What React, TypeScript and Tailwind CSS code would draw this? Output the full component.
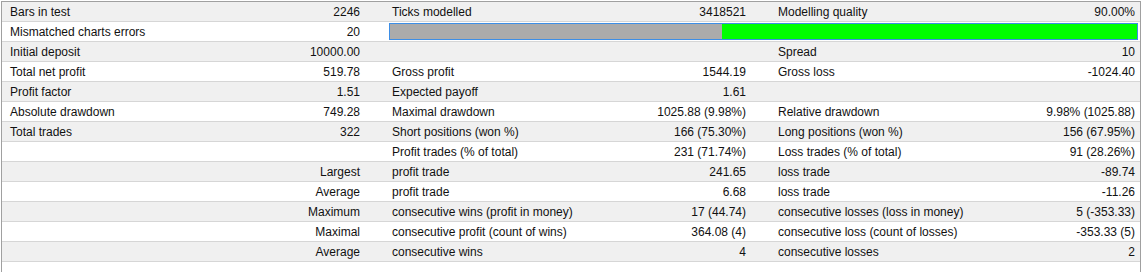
import React from "react";

type Row = [string, string, string, string, string, string];

const rows: Row[] = [
  ["Bars in test", "2246", "Ticks modelled", "3418521", "Modelling quality", "90.00%"],
  ["Mismatched charts errors", "20", "", "", "", ""],
  ["Initial deposit", "10000.00", "", "", "Spread", "10"],
  ["Total net profit", "519.78", "Gross profit", "1544.19", "Gross loss", "-1024.40"],
  ["Profit factor", "1.51", "Expected payoff", "1.61", "", ""],
  ["Absolute drawdown", "749.28", "Maximal drawdown", "1025.88 (9.98%)", "Relative drawdown", "9.98% (1025.88)"],
  ["Total trades", "322", "Short positions (won %)", "166 (75.30%)", "Long positions (won %)", "156 (67.95%)"],
  ["", "", "Profit trades (% of total)", "231 (71.74%)", "Loss trades (% of total)", "91 (28.26%)"],
  ["", "Largest", "profit trade", "241.65", "loss trade", "-89.74"],
  ["", "Average", "profit trade", "6.68", "loss trade", "-11.26"],
  ["", "Maximum", "consecutive wins (profit in money)", "17 (44.74)", "consecutive losses (loss in money)", "5 (-353.33)"],
  ["", "Maximal", "consecutive profit (count of wins)", "364.08 (4)", "consecutive loss (count of losses)", "-353.33 (5)"],
  ["", "Average", "consecutive wins", "4", "consecutive losses", "2"],
];

export default function App() {
  return (
    <div
      className="w-[1147px] h-[272px] bg-white pl-px pt-px overflow-hidden text-[12px] leading-[16px] text-[#111]"
      style={{ fontFamily: '"Liberation Sans", Arial, sans-serif' }}
    >
      <div className="w-[1140px] h-[271px] border-l border-t border-r border-[#a0a0a0] flex flex-col">
        {rows.map((r, i) => (
          <div
            key={i}
            className={`flex h-[20px] border-b border-[#d6d6d6] items-center ${
              i % 2 === 0 ? "bg-[#f0f0f0]" : "bg-white"
            }`}
          >
            <div className="w-[386px] shrink-0 flex justify-between pl-[8px] pr-[28px] whitespace-nowrap">
              <span>{r[0]}</span>
              <span>{r[1]}</span>
            </div>
            {i === 1 ? (
              <div className="flex-1 h-full pl-[1px] pr-[2px] py-[1px]">
                <div className="h-full border border-[#3d8ee6] flex">
                  <div className="w-[332px] bg-[#ababab]" />
                  <div className="flex-1 bg-[#00ff00]" />
                </div>
              </div>
            ) : (
              <>
                <div className="w-[388px] shrink-0 flex justify-between pl-[4px] pr-[30px] whitespace-nowrap">
                  <span>{r[2]}</span>
                  <span>{r[3]}</span>
                </div>
                <div className="flex-1 flex justify-between pl-[2px] pr-[5px] whitespace-nowrap">
                  <span>{r[4]}</span>
                  <span>{r[5]}</span>
                </div>
              </>
            )}
          </div>
        ))}
      </div>
    </div>
  );
}
